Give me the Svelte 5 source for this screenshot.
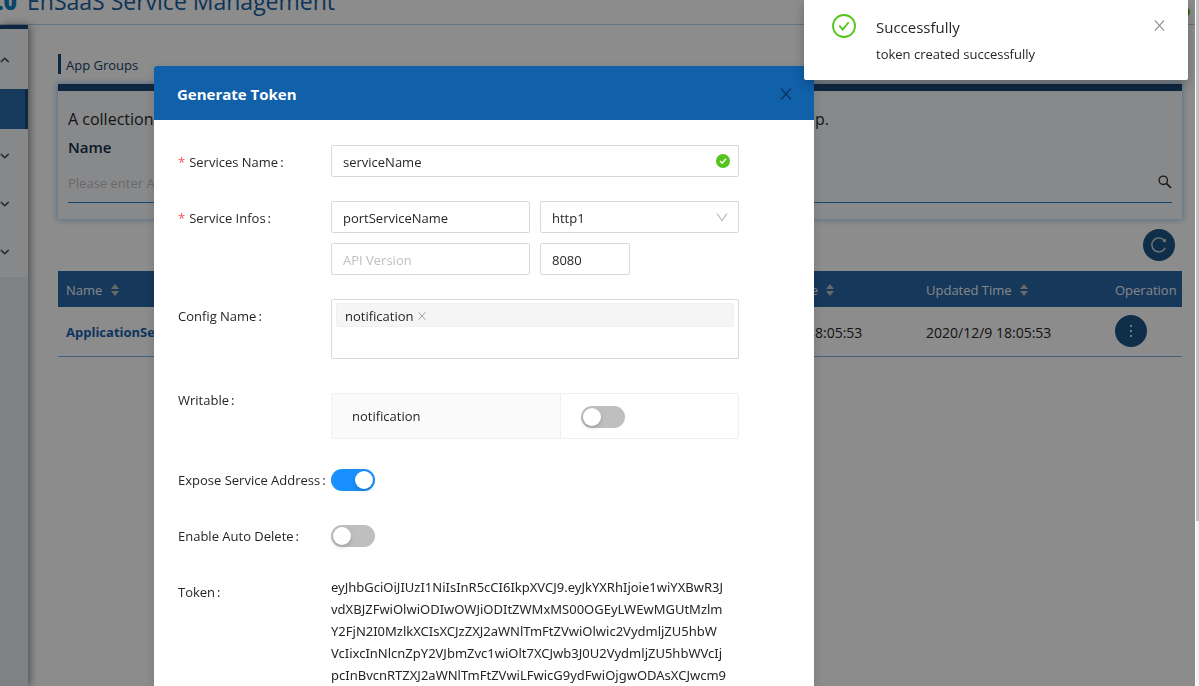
<script>
  let writable = $state(false);
  let expose = $state(true);
  let autoDelete = $state(false);

  const token = [
    'eyJhbGciOiJIUzI1NiIsInR5cCI6IkpXVCJ9.eyJkYXRhIjoie1wiYXBwR3J',
    'vdXBJZFwiOlwiODIwOWJiODItZWMxMS00OGEyLWEwMGUtMzlm',
    'Y2FjN2I0MzlkXCIsXCJzZXJ2aWNlTmFtZVwiOlwic2VydmljZU5hbW',
    'VcIixcInNlcnZpY2VJbmZvc1wiOlt7XCJwb3J0U2VydmljZU5hbWVcIj',
    'pcInBvcnRTZXJ2aWNlTmFtZVwiLFwicG9ydFwiOjgwODAsXCJwcm9'
  ];
</script>

{#snippet chevron(up)}
  <svg width="9" height="8" viewBox="0 0 9 8" fill="none" stroke="#3c4650" stroke-width="1.5">
    {#if up}<path d="M0.8 6L4.8 2.3L8.7 6" />{:else}<path d="M0.8 2L4.8 5.7L8.7 2" />{/if}
  </svg>
{/snippet}

{#snippet cross(size)}
  <svg width={size} height={size} viewBox="0 0 12 12" fill="none" stroke="currentColor" stroke-width="1.2">
    <path d="M1 0.5L11 11.5M11 0.5L1 11.5" />
  </svg>
{/snippet}

{#snippet sorter()}
  <svg class="sorter" width="8" height="12" viewBox="0 0 8 12" fill="#bfbfbf">
    <path d="M0 5L4 0L8 5ZM0 7L4 12L8 7Z" />
  </svg>
{/snippet}

<div class="page">
  <header class="top">
    <span class="version">.0</span>
    <span class="product">EnSaaS Service Management</span>
    <span class="avatar"></span>
  </header>
  <div class="body">
    <nav class="side" aria-label="Main">
      <div class="menu">
        <button class="item" aria-label="Collapse section">{@render chevron(true)}</button>
        <button class="item selected" aria-label="App groups"></button>
        <button class="item" aria-label="Expand section">{@render chevron(false)}</button>
        <button class="item" aria-label="Expand section">{@render chevron(false)}</button>
        <button class="item" aria-label="Expand section">{@render chevron(false)}</button>
      </div>
    </nav>
    <main>
      <h1>App Groups</h1>
      <section class="card">
        <div class="intro"><span>A collection</span><span class="tail">of apps that share one group.</span></div>
        <label class="name" for="search">Name</label>
        <div class="search">
          <input id="search" placeholder="Please enter App Group Name" />
          <svg width="14" height="14" viewBox="0 0 14 14" fill="none" stroke="#2a2a2a" stroke-width="1.3">
            <circle cx="5.3" cy="5.3" r="4.2" /><path d="M8.4 8.4L13 13" stroke-width="1.7" />
          </svg>
        </div>
      </section>
      <div class="tools">
        <button class="round" aria-label="Refresh">
          <svg width="16" height="16" viewBox="0 0 16 16" fill="none" stroke="#ddd" stroke-width="1.4">
            <path d="M14.2 10.8A7 7 0 1 1 13.6 3.9" /><path d="M14.8 1.4V5.2L11.2 4.4Z" fill="#ddd" stroke="none" />
          </svg>
        </button>
      </div>
      <table>
        <thead>
          <tr><th>Name {@render sorter()}</th><th class="created">Created Time {@render sorter()}</th><th class="updated">Updated Time {@render sorter()}</th><th class="op">Operation</th></tr>
        </thead>
        <tbody>
          <tr>
            <td><a href="#app">ApplicationService</a></td>
            <td class="created date">2020/12/9 18:05:53</td>
            <td class="date">2020/12/9 18:05:53</td>
            <td class="action">
              <button class="round" aria-label="More operations">
                <svg width="4" height="14" viewBox="0 0 4 14" fill="#ddd"><path d="M1 1h2v2H1zM1 6h2v2H1zM1 11h2v2H1z" /></svg>
              </button>
            </td>
          </tr>
        </tbody>
      </table>
    </main>
  </div>
</div>

<div class="mask">
  <div class="dialog" role="dialog" aria-labelledby="dialog-title">
    <div class="dialog-head">
      <h2 id="dialog-title">Generate Token</h2>
      <button class="plain dark" aria-label="Close dialog">{@render cross(12)}</button>
    </div>
    <form>
      <div class="row">
        <label class="required" for="service">Services Name</label>
        <div class="box checked">
          <input id="service" value="serviceName" />
          <svg width="14" height="14" viewBox="0 0 14 14"><circle cx="7" cy="7" r="7" fill="#52c41a" /><path d="M4 7.1L6.2 9.3L10 4.8" fill="none" stroke="#fff" stroke-width="1.4" /></svg>
        </div>
      </div>
      <div class="row">
        <label class="required" for="port-name">Service Infos</label>
        <div class="infos">
          <div class="box"><input id="port-name" value="portServiceName" /></div>
          <div class="box">
            <select aria-label="Protocol"><option>http1</option></select>
            <svg width="12" height="10" viewBox="0 0 12 10" fill="none" stroke="#bfbfbf" stroke-width="1.3"><path d="M1 1.5L6 8.7L11 1.5" /></svg>
          </div>
          <div class="box"><input aria-label="API Version" placeholder="API Version" /></div>
          <div class="box port"><input aria-label="Port" value="8080" /></div>
        </div>
      </div>
      <div class="row">
        <span class="label">Config Name</span>
        <div class="tags">
          <div class="tag">notification <button type="button" class="plain" aria-label="Remove notification">{@render cross(8)}</button></div>
        </div>
      </div>
      <div class="row">
        <span class="label">Writable</span>
        <div class="writable">
          <label for="writable">notification</label>
          <div class="cell"><input id="writable" class="switch" type="checkbox" role="switch" bind:checked={writable} /></div>
        </div>
      </div>
      <div class="row">
        <label for="expose">Expose Service Address</label>
        <div class="control"><input id="expose" class="switch" type="checkbox" role="switch" bind:checked={expose} /></div>
      </div>
      <div class="row">
        <label for="auto">Enable Auto Delete</label>
        <div class="control"><input id="auto" class="switch" type="checkbox" role="switch" bind:checked={autoDelete} /></div>
      </div>
      <div class="row">
        <span class="label">Token</span>
        <div class="token">{#each token as line}<div>{line}</div>{/each}</div>
      </div>
    </form>
  </div>
</div>

<div class="notice" role="status">
  <svg class="ok" width="24" height="24" viewBox="0 0 24 24" fill="none" stroke="#52c41a" stroke-width="1.8">
    <circle cx="12" cy="12" r="11" /><path d="M7.3 11.6L10.8 15.6L16.6 8.2" />
  </svg>
  <div class="message">
    <strong>Successfully</strong>
    <p>token created successfully</p>
  </div>
  <button class="plain" aria-label="Close notification">{@render cross(11)}</button>
</div>
<div class="rail"><div class="thumb"></div></div>

<style>
  :global(body) {
    font-family: "Open Sans", "Noto Sans", sans-serif;
    font-size: 13px;
    color: #262626;
    overflow: hidden;
  }
  :global(*) { box-sizing: border-box; }
  h1, h2, p { margin: 0; }
  input, select, button { font: inherit; color: inherit; }
  button { border: 0; padding: 0; cursor: pointer; }
  svg { display: block; flex: none; }

  .page { height: 100vh; display: flex; flex-direction: column; overflow: hidden; background: #fff; }
  .top {
    height: 25px; flex: none; display: flex; align-items: flex-end; gap: 10px;
    border-bottom: 1px solid #b9d0e8; line-height: 30px; padding-bottom: 8px; color: #17609f; font-size: 23px;
  }
  .version { color: #0e80c0; font-weight: 800; width: 17px; display: flex; justify-content: flex-end; }
  .avatar { width: 8px; height: 8px; border-radius: 50%; background: #52c41a; margin-left: auto; margin-right: 9px; }
  .body { flex: 1; display: flex; min-height: 0; }
  .side { width: 28px; background: #e6edf3; border-top: 4px solid #1b4776; box-shadow: 2px 0 8px rgba(0, 0, 0, .45); }
  .menu { display: flex; flex-direction: column; gap: 8px; background: #f4f7f9; padding: 12px 0 4px; }
  .item { display: flex; align-items: center; width: 100%; height: 40px; padding-bottom: 2px; background: transparent; }
  .item.selected { background: #286aa7; border-right: 3px solid #1b4776; }
  main { flex: 1; padding: 29px 17px 0 30px; }
  h1 { font-size: 13px; font-weight: 400; line-height: 18px; color: #17406b; border-left: 3px solid #1b4776; padding: 2px 0 0 5px; }
  .card {
    margin-top: 10px; height: 135px; border-top: 7px solid #1b4776; padding: 14px 10px 0;
    background: #f8fafc; box-shadow: 0 0 6px 1px #9fc8ee;
  }
  .intro { display: flex; justify-content: space-between; line-height: 28px; font-size: 16px; padding-right: 343px; }
  .name { display: block; font-size: 15px; font-weight: 600; line-height: 28px; color: #112c4a; }
  .search { display: flex; align-items: center; height: 42px; border-bottom: 1px solid #2584c8; }
  .search input { flex: 1; border: 0; padding: 2px 0 0; background: transparent; outline: 0; }
  input::placeholder { color: #bfbfbf; opacity: 1; }
  .tools { display: flex; justify-content: flex-end; padding: 10px 7px 10px; }
  .round { width: 32px; height: 32px; border-radius: 50%; background: #1d5588; display: flex; align-items: center; justify-content: center; }
  table { width: 100%; table-layout: fixed; border-collapse: collapse; }
  th { height: 36px; padding: 2px 8px 0; text-align: left; font-weight: 400; color: #f0f4f8; background: #2866a4; white-space: nowrap; }
  td { height: 49px; padding: 2px 8px 0; border-bottom: 1px solid #74b0e8; }
  td.action { padding-top: 0; }
  td a { color: #1562ac; font-weight: 700; text-decoration: none; }
  .date { font-size: 14px; }
  .created { padding-left: 81px; width: 262px; white-space: nowrap; }
  .updated { width: 189px; }
  .op { width: 75px; }
  .sorter { display: inline-block; margin-left: 5px; vertical-align: -1px; }

  .mask { position: fixed; inset: 0; background: rgba(0, 0, 0, .45); overflow: hidden; }
  .dialog { width: 660px; margin: 66px 0 0 154px; background: #fff; border-radius: 2px; box-shadow: 0 4px 12px rgba(0, 0, 0, .15); }
  .dialog-head { height: 54px; background: #1160aa; border-radius: 2px 2px 0 0; display: flex; align-items: center; justify-content: space-between; padding: 2px 22px 0 23px; }
  h2 { font-size: 15px; font-weight: 700; color: #fff; }
  .plain { background: transparent; color: #8c8c8c; display: flex; }
  .dark { color: #0b3560; }
  form { padding: 25px 75px 24px 24px; display: flex; flex-direction: column; gap: 24px; }
  .row { display: grid; grid-template-columns: 153px minmax(0, 1fr); line-height: 32px; }
  .row > label, .label { padding-top: 1px; height: 32px; }
  .row > label::after, .label::after { content: ":"; margin-left: 2px; }
  .required::before { content: "*"; color: #ff4d4f; margin-right: 4px; }
  .box { height: 32px; border: 1px solid #d9d9d9; border-radius: 2px; display: flex; align-items: center; padding-right: 10px; background: #fff; }
  .box.checked { padding-right: 8px; }
  .box input, .box select { flex: 1; min-width: 0; border: 0; background: transparent; padding: 2px 0 0 11px; outline: 0; appearance: none; }
  .infos { display: grid; grid-template-columns: 1fr 1fr; gap: 10px; }
  .port { width: 90px; }
  .tags { height: 60px; border: 1px solid #d9d9d9; border-radius: 2px; padding: 3px 4px; }
  .tag { display: flex; align-items: center; gap: 4px; height: 24px; line-height: 22px; padding: 2px 8px 0; background: #f5f5f5; border: 1px solid #f0f0f0; border-radius: 2px; }
  .writable { display: grid; grid-template-columns: 229px 1fr; height: 46px; line-height: 44px; margin: 10px 0 0; border: 1px solid #f0f0f0; border-radius: 2px; }
  .writable label { background: #fafafa; border-right: 1px solid #f0f0f0; padding-left: 20px; }
  .cell { display: flex; align-items: center; padding: 2px 0 0 20px; }
  .control { display: flex; align-items: center; padding-top: 2px; height: 32px; }
  .switch { appearance: none; width: 44px; height: 22px; margin: 0; border-radius: 11px; background: #bfbfbf; padding: 2px; display: flex; cursor: pointer; }
  .switch::before { content: ""; width: 18px; height: 18px; border-radius: 50%; background: #fff; box-shadow: 0 2px 4px rgba(0, 35, 11, .2); }
  .switch:checked { background: #1890ff; justify-content: flex-end; }
  .token { font-family: "Noto Sans", "Open Sans", sans-serif; line-height: 22px; white-space: nowrap; padding-top: 1px; }

  .notice {
    position: fixed; top: 0; right: 11px; width: 384px; height: 80px; display: flex; gap: 20px;
    padding: 14px 23px 0 28px; background: #fff; border-radius: 0 0 2px 2px; box-shadow: 0 4px 12px rgba(0, 0, 0, .25);
  }
  .message { flex: 1; }
  .message strong { display: block; font-size: 15px; font-weight: 400; line-height: 26px; }
  .message p { line-height: 28px; }
  .notice .plain { align-self: flex-start; margin-top: 6px; }
  .rail { position: fixed; top: 0; right: 0; bottom: 0; width: 4px; background: #f1f1f1; border-left: 1px solid #fff; }
  .thumb { height: 76%; background: #c1c1c1; }
</style>
